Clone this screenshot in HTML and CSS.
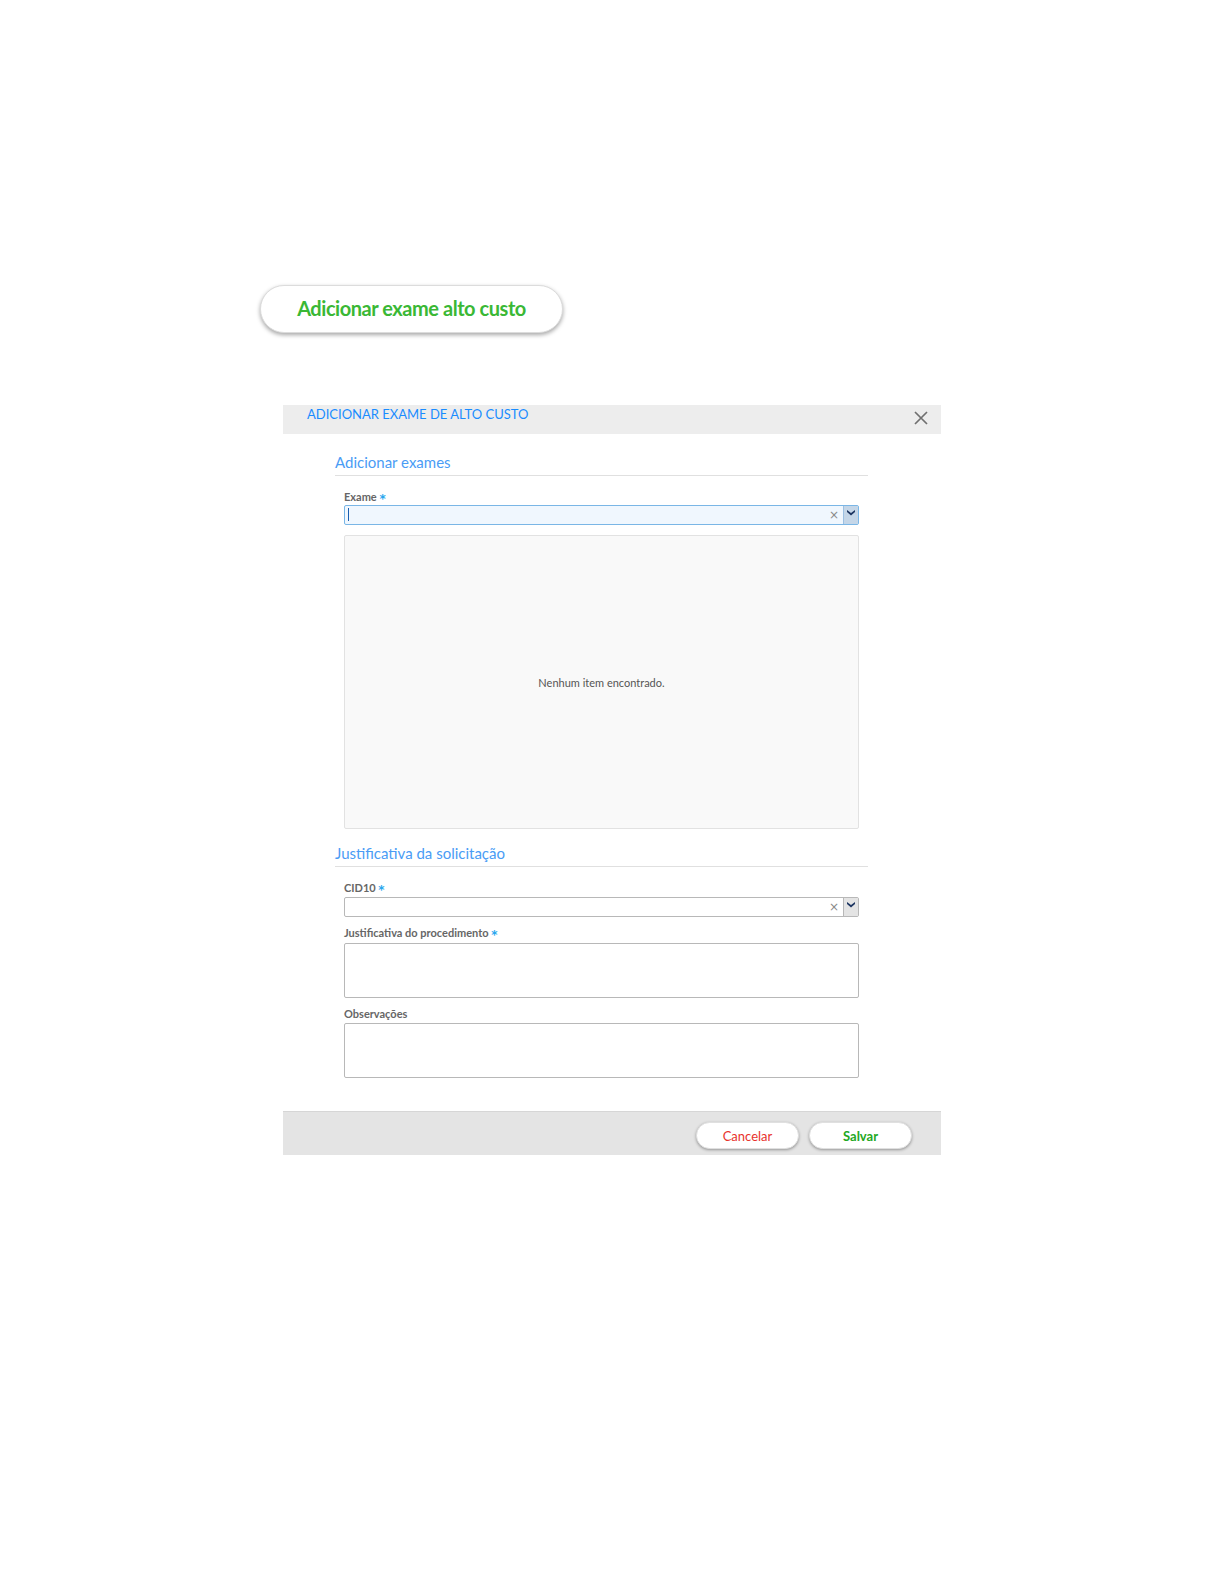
FILE: index.html
```html
<!DOCTYPE html>
<html lang="pt-BR">
<head>
<meta charset="utf-8">
<title>Adicionar exame de alto custo</title>
<link rel="stylesheet" href="styles.css">
</head>
<body>
<div class="page">
  <button class="launch" type="button">Adicionar exame alto custo</button>

  <div class="dialog">
    <div class="dialog-header">
      <span class="dialog-title">ADICIONAR EXAME DE ALTO CUSTO</span>
      <svg class="close" width="14" height="14" viewBox="0 0 14 14"><path d="M1 1 L13 13 M13 1 L1 13" stroke="#707070" stroke-width="1.7" fill="none"/></svg>
    </div>

    <div class="dialog-body">
      <h2 class="section-title">Adicionar exames</h2>
      <div class="fields">
        <label class="label top">Exame <span class="req">*</span></label>
        <div class="select focus">
          <span class="caret"></span>
          <span class="clear">×</span>
          <span class="drop"><svg width="8" height="6" viewBox="0 0 8 6"><polygon points="0,0 4,3 8,0 8,2 4,5.5 0,2" fill="#1d3561"/></svg></span>
        </div>
        <div class="results">Nenhum item encontrado.</div>
      </div>

      <h2 class="section-title second">Justificativa da solicitação</h2>
      <div class="fields">
        <label class="label top gap2">CID10 <span class="req">*</span></label>
        <div class="select">
          <span class="clear">×</span>
          <span class="drop"><svg width="8" height="6" viewBox="0 0 8 6"><polygon points="0,0 4,3 8,0 8,2 4,5.5 0,2" fill="#1d3561"/></svg></span>
        </div>
        <label class="label gap3">Justificativa do procedimento <span class="req">*</span></label>
        <div class="textarea"></div>
        <label class="label gap2">Observações</label>
        <div class="textarea"></div>
      </div>
    </div>

    <div class="dialog-footer">
      <button class="pill cancel" type="button">Cancelar</button>
      <button class="pill save" type="button">Salvar</button>
    </div>
  </div>
</div>
</body>
</html>
```

FILE: styles.css
```css
html, body {
  margin: 0;
  padding: 0;
  background: #ffffff;
}

body {
  font-family: Lato, "Open Sans", "Liberation Sans", sans-serif;
  color: #555;
}

.page {
  padding-top: 285px;
}

.launch {
  display: block;
  margin-left: 260px;
  width: 303px;
  height: 48px;
  box-sizing: border-box;
  border: 1px solid #dcdcdc;
  border-radius: 24px;
  background: #fff;
  box-shadow: 0 2px 4px rgba(0, 0, 0, 0.35);
  font-family: Lato, sans-serif;
  font-size: 20px;
  font-weight: 700;
  letter-spacing: -0.45px;
  color: #3ab835;
  padding: 0 0 2px 0;
}

.dialog {
  margin: 72px 0 0 283px;
  width: 658px;
  background: #fff;
}

.dialog-header {
  height: 29px;
  background: #ededed;
  display: flex;
  align-items: flex-start;
  padding: 2px 13px 0 24px;
  box-sizing: border-box;
}

.dialog-title {
  font-size: 13px;
  line-height: 15px;
  color: #1a8cff;
  letter-spacing: 0;
}

.close {
  margin-left: auto;
  margin-top: 4px;
}

.dialog-body {
  padding: 0 73px 0 52px;
}

.section-title {
  margin: 19px 0 0 0;
  padding-bottom: 4px;
  border-bottom: 1px solid #e0e0e0;
  font-size: 15px;
  line-height: 18px;
  font-weight: 400;
  color: #4a9cf5;
}

.section-title.second {
  margin-top: 15px;
}

.fields {
  padding: 0 9px;
}

.label {
  display: block;
  margin-top: 9px;
  margin-bottom: 1px;
  font-size: 11px;
  line-height: 14px;
  font-weight: 700;
  color: #666;
  letter-spacing: 0;
}

.label.top {
  margin-top: 14px;
}

.label.gap3 {
  margin-bottom: 3px;
}

.label.gap2 {
  margin-bottom: 2px;
}

.req {
  color: #29a6ee;
  font-family: "DejaVu Sans", sans-serif;
  font-size: 12px;
  font-weight: 700;
  position: relative;
  top: 2px;
}

.select {
  position: relative;
  height: 20px;
  box-sizing: border-box;
  border: 1px solid #b8b8b8;
  border-radius: 2px;
  background: #fff;
  display: flex;
  align-items: stretch;
}

.select.focus {
  border-color: #7ab6e6;
  background: #f0f7fe;
}

.caret {
  width: 1px;
  height: 13px;
  background: #1a5fb0;
  margin: 2px 0 0 3px;
}

.clear {
  margin-left: auto;
  margin-right: 4px;
  font-size: 12px;
  line-height: 19px;
  color: #8a8a8a;
  font-family: "DejaVu Sans", sans-serif;
}

.drop {
  width: 15px;
  border-left: 1px solid #b8b8b8;
  background: #e4e4e4;
  display: flex;
  justify-content: center;
  padding-top: 4px;
  box-sizing: border-box;
}

.select.focus .drop {
  background: #c4d6e8;
  border-left-color: #9cc0e2;
}

.results {
  margin-top: 10px;
  height: 294px;
  box-sizing: border-box;
  border: 1px solid #e2e2e2;
  border-radius: 2px;
  background: #f9f9f9;
  display: flex;
  align-items: center;
  justify-content: center;
  font-size: 11px;
  color: #555;
  letter-spacing: 0;
}

.textarea {
  height: 55px;
  box-sizing: border-box;
  border: 1px solid #b8b8b8;
  border-radius: 2px;
  background: #fff;
}

.dialog-footer {
  margin-top: 33px;
  height: 44px;
  box-sizing: border-box;
  border-top: 1px solid #d6d6d6;
  background: #e4e4e4;
  display: flex;
  justify-content: flex-end;
  align-items: flex-start;
  gap: 10px;
  padding: 10px 29px 0 0;
}

.pill {
  width: 103px;
  height: 27px;
  border: 1px solid #e0e0e0;
  border-radius: 14px;
  background: #fff;
  box-shadow: 0 1px 3px rgba(0, 0, 0, 0.35);
  font-family: Lato, sans-serif;
  font-size: 13px;
  padding: 0;
}

.cancel {
  color: #e8322c;
}

.save {
  color: #22a822;
  font-weight: 700;
}
```
